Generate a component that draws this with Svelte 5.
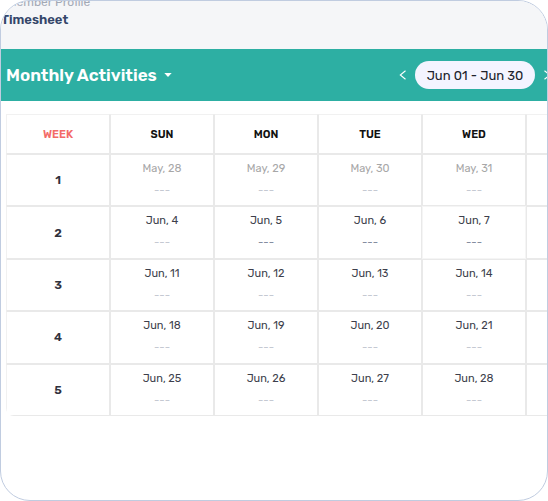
<script>
  const days = ['SUN', 'MON', 'TUE', 'WED', 'THU', 'FRI', 'SAT'];
  const shortDate = (date) =>
    `${date.toLocaleString('en-US', { month: 'short' })}, ${date.getDate()}`;

  const weeks = [0, 1, 2, 3, 4].map((w) =>
    days.map((_, d) => {
      const date = new Date(2023, 4, 28 + w * 7 + d);
      return {
        label: shortDate(date),
        outside: date.getMonth() !== 5,
        filled: w === 1 && d > 0,
        today: w === 1 && d === 3
      };
    })
  );
</script>

<main class="card">
  <header class="crumbs">
    <a href="#profile">Member Profile</a>
    <h1>Timesheet</h1>
  </header>

  <div class="toolbar">
    <button class="title" type="button">
      Monthly Activities
      <svg width="8" height="4" viewBox="0 0 8 4" aria-hidden="true"><path d="M0.3 0h7.4L4 4z" fill="currentColor" /></svg>
    </button>
    <div class="nav">
      <button class="arrow" type="button" aria-label="Previous month">
        <svg width="8" height="10" viewBox="0 0 8 10" aria-hidden="true"><path d="M6.5 0.8L1.3 5l5.2 4.2" /></svg>
      </button>
      <button class="range" type="button">Jun 01 - Jun 30</button>
      <button class="arrow" type="button" aria-label="Next month">
        <svg width="8" height="10" viewBox="0 0 8 10" aria-hidden="true"><path d="M1.5 0.8L6.7 5L1.5 9.2" /></svg>
      </button>
    </div>
  </div>

  <div class="sheet">
    <table>
      <thead>
        <tr>
          <th class="week" scope="col">WEEK</th>
          {#each days as day}<th scope="col">{day}</th>{/each}
        </tr>
      </thead>
      <tbody>
        {#each weeks as week, i}
          <tr>
            <th scope="row">{i + 1}</th>
            {#each week as day}
              <td class:outside={day.outside} class:filled={day.filled} class:today={day.today}>
                <span class="date">{day.label}</span>
                <span class="hours">---</span>
              </td>
            {/each}
          </tr>
        {/each}
      </tbody>
    </table>
  </div>
</main>

<style>
  :global(body) {
    margin: 0;
    background: #fff;
  }
  .card {
    box-sizing: border-box;
    min-height: 100vh;
    border: 1px solid #c0cce0;
    border-radius: 30px;
    overflow: hidden;
    background: #fff;
    font-family: Rubik, Inter, 'Liberation Sans', sans-serif;
    color: #3d3f4c;
  }
  .crumbs {
    box-sizing: border-box;
    height: 48px;
    background: #f5f6f8;
    display: flex;
    flex-direction: column;
  }
  .crumbs a {
    margin-top: -8px;
    padding-left: 6px;
    font-size: 12px;
    line-height: 18px;
    color: #a3a9b5;
    text-decoration: none;
  }
  h1 {
    margin: 0;
    font-size: 13px;
    line-height: 18px;
    font-weight: 600;
    color: #34466a;
  }
  button {
    border: 0;
    background: none;
    padding: 0;
    font: inherit;
    color: #fff;
    cursor: pointer;
  }
  .toolbar {
    height: 52px;
    padding-left: 5px;
    display: flex;
    align-items: center;
    justify-content: space-between;
    background: #2dafa3;
    white-space: nowrap;
  }
  .title {
    display: flex;
    align-items: center;
    gap: 7px;
    font-size: 17px;
    font-weight: 600;
  }
  .nav {
    display: flex;
    align-items: center;
    gap: 8px;
    margin-right: -4px;
  }
  .arrow {
    display: flex;
  }
  .arrow path {
    fill: none;
    stroke: #fff;
    stroke-width: 1.1;
  }
  .range {
    width: 120px;
    height: 28px;
    border-radius: 14px;
    background: #f4f4ff;
    color: #20222b;
    font-size: 13px;
  }
  .sheet {
    margin: 13px 0 0 5px;
    overflow: hidden;
    border-bottom-left-radius: 8px;
  }
  table {
    width: 100%;
    min-width: 832px;
    height: 302px;
    table-layout: fixed;
    border-collapse: separate;
    border-spacing: 0;
    text-align: center;
  }
  th,
  td {
    box-sizing: border-box;
    padding: 0;
    border: 1px solid #e9e9e9;
  }
  thead th {
    height: 40px;
    border-top-color: #f1f1f1;
    font-size: 11px;
    font-weight: 600;
    color: #111;
  }
  thead .week {
    color: #f36b68;
  }
  tbody th {
    font-size: 12px;
    font-weight: 600;
    color: #2f313d;
  }
  tr > :first-child {
    border-left-color: #f1f1f1;
  }
  td {
    vertical-align: top;
    font-size: 11px;
    line-height: 22px;
  }
  .date,
  .hours {
    display: block;
  }
  .date {
    padding-top: 3px;
  }
  .hours {
    color: #c5c9d2;
  }
  .filled .hours {
    color: #858da0;
  }
  .outside .date {
    color: #a7a7a7;
  }
  .today {
    border-color: #f5f5f5;
  }
</style>
